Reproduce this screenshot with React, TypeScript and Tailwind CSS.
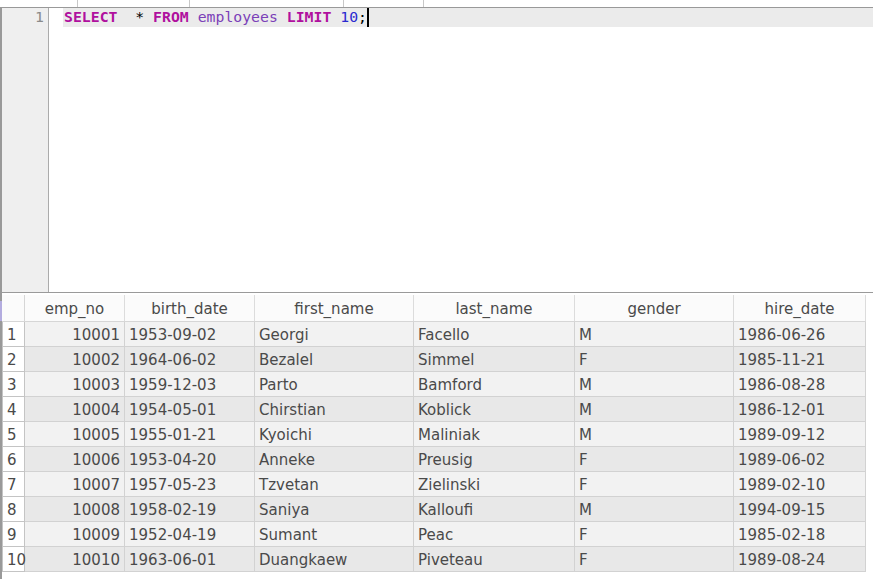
const columns = [
  { key: 'emp_no', w: 'w-[100px]', align: 'text-right pr-[4px]' },
  { key: 'birth_date', w: 'w-[130px]', align: 'text-left pl-[4px]' },
  { key: 'first_name', w: 'w-[159px]', align: 'text-left pl-[4px]' },
  { key: 'last_name', w: 'w-[161px]', align: 'text-left pl-[4px]' },
  { key: 'gender', w: 'w-[159px]', align: 'text-left pl-[4px]' },
  { key: 'hire_date', w: 'w-[132px]', align: 'text-left pl-[4px]' },
]

const rows = [
  ['10001', '1953-09-02', 'Georgi', 'Facello', 'M', '1986-06-26'],
  ['10002', '1964-06-02', 'Bezalel', 'Simmel', 'F', '1985-11-21'],
  ['10003', '1959-12-03', 'Parto', 'Bamford', 'M', '1986-08-28'],
  ['10004', '1954-05-01', 'Chirstian', 'Koblick', 'M', '1986-12-01'],
  ['10005', '1955-01-21', 'Kyoichi', 'Maliniak', 'M', '1989-09-12'],
  ['10006', '1953-04-20', 'Anneke', 'Preusig', 'F', '1989-06-02'],
  ['10007', '1957-05-23', 'Tzvetan', 'Zielinski', 'F', '1989-02-10'],
  ['10008', '1958-02-19', 'Saniya', 'Kalloufi', 'M', '1994-09-15'],
  ['10009', '1952-04-19', 'Sumant', 'Peac', 'F', '1985-02-18'],
  ['10010', '1963-06-01', 'Duangkaew', 'Piveteau', 'F', '1989-08-24'],
]

const mono = { fontFamily: '"DejaVu Sans Mono", "Liberation Mono", monospace' }

export default function App() {
  return (
    <div className="w-[873px] h-[579px] bg-white overflow-hidden flex flex-col text-[#4a4a4a]"
      style={{ fontFamily: '"DejaVu Sans", "Noto Sans", sans-serif' }}>
      {/* cut-off strip above the editor */}
      <div className="h-[7px] flex shrink-0">
        <div className="w-[78px] border-r border-[#c8c8c8]" />
        <div className="w-[112px] border-r border-[#c8c8c8]" />
        <div className="w-[154px] border-r border-[#c8c8c8]" />
        <div className="w-[80px] border-r border-[#c8c8c8]" />
      </div>

      <div className="flex-1 flex flex-col border-t border-l-2 border-[#999]">
        {/* editor */}
        <div className="h-[284px] flex shrink-0">
          <div className="w-[47px] bg-[#efefef] border-r border-[#ababab] shrink-0">
            <div className="h-[19px] flex items-center justify-end pr-[4px] text-[14.8px] text-[#8a8a8a]" style={mono}>1</div>
          </div>
          <div className="flex-1 pl-[14px]">
            <div className="h-[19px] bg-[#ebebeb] flex items-center pl-[1px] text-[14.8px] leading-none whitespace-pre" style={mono}>
              <span className="font-bold text-[#b0109e]">SELECT</span>
              <span className="text-black">{'  * '}</span>
              <span className="font-bold text-[#b0109e]">FROM</span>
              <span> </span>
              <span className="text-[#7b3fb8]">employees</span>
              <span> </span>
              <span className="font-bold text-[#b0109e]">LIMIT</span>
              <span> </span>
              <span className="text-[#2a2ad0]">10</span>
              <span className="text-black">;</span>
              <span className="w-[2px] h-[19px] bg-black" />
            </div>
          </div>
        </div>

        {/* splitter + result grid */}
        <div className="border-t border-[#9a9a9a] pt-[2px] flex-1 flex relative">
          <div className="absolute left-[-2px] top-[8px] w-[2px] h-[20px] bg-[#b3acdf]" />
          <div className="flex flex-col text-[15px]">
            <div className="flex h-[27px] bg-[#fbfbfb] border-b border-[#d6d6d6]">
              <div className="w-[23px] border-r border-[#d6d6d6]" />
              {columns.map((c) => (
                <div key={c.key} className={`${c.w} border-r border-[#dcdcdc] flex items-center justify-center pt-[3px]`}>
                  {c.key}
                </div>
              ))}
            </div>
            {rows.map((r, i) => (
              <div key={r[0]} className={`flex h-[25px] ${i % 2 === 0 ? 'bg-[#f2f2f2]' : 'bg-[#e8e8e8]'}`}>
                <div className="w-[23px] bg-white border-r border-b border-l border-[#c4c4c4] pl-[4px] pt-[2px] flex items-center leading-none">
                  {i + 1}
                </div>
                {columns.map((c, j) => (
                  <div key={c.key} className={`${c.w} ${c.align} border-r border-b border-[#d2d2d2] leading-[26px]`}>
                    {r[j]}
                  </div>
                ))}
              </div>
            ))}
          </div>
        </div>
      </div>
    </div>
  )
}
